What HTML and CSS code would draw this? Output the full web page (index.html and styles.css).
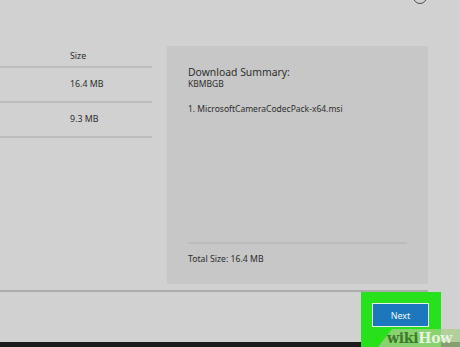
FILE: index.html
```html
<!DOCTYPE html>
<html lang="en">

<head>
    <meta charset="UTF-8">
    <meta name="viewport" content="width=device-width, initial-scale=1.0">
    <title>Download Summary</title>
    <link rel="stylesheet" href="styles.css">
</head>
<body>
    <div class="window">
        <span class="close-circle"></span>
        <div class="content">
            <div class="files">
                <div class="row header">Size</div>
                <div class="row">16.4 MB</div>
                <div class="row">9.3 MB</div>
            </div>
            <div class="summary">
                <div class="summary-title">Download Summary:</div>
                <div class="summary-id">KBMBGB</div>
                <div class="summary-item">1. MicrosoftCameraCodecPack-x64.msi</div>
                <div class="summary-total">Total Size: 16.4 MB</div>
            </div>
        </div>
        <div class="footer">
            <div class="highlight">
                <button class="next-button">Next</button>
            </div>
        </div>
    </div>
    <div class="taskbar"></div>
    <div class="watermark"><span class="wiki">wiki</span><span class="how">How</span></div>
</body>
</html>
```

FILE: styles.css
```css
body {
    margin: 0;
    padding: 0;
    width: 460px;
    height: 347px;
    overflow: hidden;
    position: relative;
    background: #d1d1d1;
    font-family: "Noto Sans", "Open Sans", sans-serif;
    color: #2e2e2e;
}

.window {
    height: 342px;
    display: flex;
    flex-direction: column;
    position: relative;
}

.close-circle {
    position: absolute;
    left: 413px;
    top: -10px;
    width: 12px;
    height: 12px;
    border: 1.5px solid #4a4a4a;
    border-radius: 50%;
}

.content {
    display: flex;
    gap: 15px;
    padding-top: 46px;
    height: 244px;
}

.files {
    width: 152px;
}

.row {
    height: 33px;
    line-height: 33px;
    padding-left: 70px;
    font-size: 8.8px;
    border-bottom: 2px solid #bdbdbd;
}

.row.header {
    height: 20px;
    line-height: 20px;
}

.summary {
    display: flex;
    flex-direction: column;
    width: 219px;
    height: 200px;
    padding: 19px 21px 19px 21px;
    background: #c7c7c7;
}

.summary-title {
    font-size: 10.4px;
    line-height: 14px;
}

.summary-id {
    font-size: 8.5px;
    line-height: 10px;
}

.summary-item {
    margin-top: 14px;
    font-size: 8.5px;
}

.summary-total {
    margin-top: auto;
    padding-top: 9px;
    border-top: 2px solid #bcbcbc;
    font-size: 8.7px;
}

.footer {
    width: 428px;
    flex: 1;
    border-top: 2px solid #acacac;
    position: relative;
}

.highlight {
    position: absolute;
    left: 361px;
    top: 0;
    width: 80px;
    height: 55px;
    background: #27e21b;
}

.next-button {
    display: block;
    margin: 11px 0 0 11px;
    width: 57px;
    height: 24px;
    padding: 0;
    border: 1.5px solid #e6f2e6;
    background: #1d77bd;
    color: #f2f6fa;
    font-family: "Noto Sans", "Open Sans", sans-serif;
    font-size: 9px;
}

.taskbar {
    height: 5px;
    background: #1b1b1b;
}

.watermark {
    position: absolute;
    left: 378px;
    top: 329px;
    width: 82px;
    height: 18px;
    padding-left: 9px;
    background: rgba(170, 205, 140, 0.75);
    clip-path: polygon(14px 0, 100% 0, 100% 100%, 0 100%);
    font-family: "DejaVu Serif", serif;
    font-weight: bold;
    font-size: 14px;
    line-height: 18px;
    letter-spacing: -0.3px;
}

.wiki {
    color: #3d7b2a;
}

.how {
    color: #e8f2e0;
}
```
